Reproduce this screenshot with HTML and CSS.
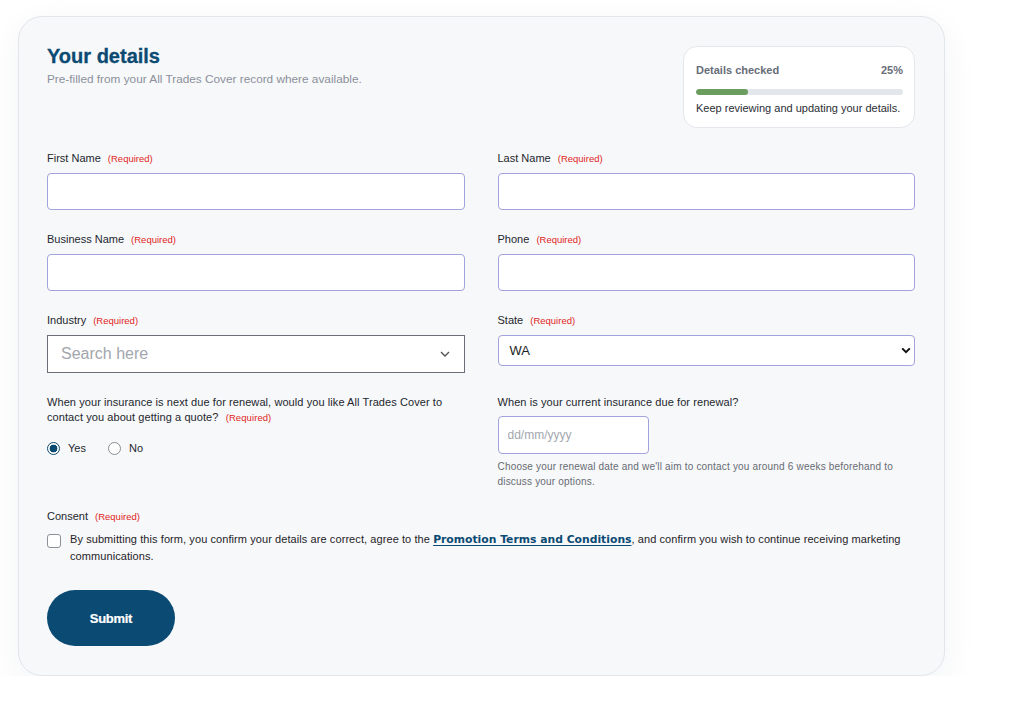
FILE: index.html
```html
<!DOCTYPE html>
<html lang="en">
<head>
<meta charset="utf-8">
<title>Your details</title>
<link rel="stylesheet" href="styles.css">
</head>
<body>
<main class="card">
  <header class="head">
    <div class="intro">
      <h1 class="title">Your details</h1>
      <p class="subtitle">Pre-filled from your All Trades Cover record where available.</p>
    </div>
    <aside class="progress">
      <div class="progress-row"><span>Details checked</span><span>25%</span></div>
      <div class="bar"><div class="bar-fill" style="width:25%"></div></div>
      <p class="progress-note">Keep reviewing and updating your details.</p>
    </aside>
  </header>

  <form class="form">
    <div class="grid">
      <div class="field">
        <label class="label">First Name <span class="req">(Required)</span></label>
        <input class="input" type="text">
      </div>
      <div class="field">
        <label class="label">Last Name <span class="req">(Required)</span></label>
        <input class="input" type="text">
      </div>
      <div class="field">
        <label class="label">Business Name <span class="req">(Required)</span></label>
        <input class="input" type="text">
      </div>
      <div class="field">
        <label class="label">Phone <span class="req">(Required)</span></label>
        <input class="input" type="text">
      </div>
      <div class="field">
        <label class="label">Industry <span class="req">(Required)</span></label>
        <div class="combo">
          <span class="combo-ph">Search here</span>
          <svg class="combo-chev" width="10" height="6" viewBox="0 0 10 6"><path d="M1 1l4 4 4-4" fill="none" stroke="#555" stroke-width="1.4"/></svg>
        </div>
      </div>
      <div class="field">
        <label class="label">State <span class="req">(Required)</span></label>
        <div class="select">
          <span class="select-val">WA</span>
          <svg class="select-chev" width="10" height="7" viewBox="0 0 10 7"><path d="M1.2 1.4l3.8 3.8 3.8-3.8" fill="none" stroke="#111" stroke-width="2"/></svg>
        </div>
      </div>
      <div class="field">
        <p class="question"><span class="ln">When your insurance is next due for renewal, would you like All Trades Cover to</span> <span class="ln">contact you about getting a quote?</span> <span class="req">(Required)</span></p>
        <div class="radios">
          <label class="radio"><span class="dot dot-on"></span>Yes</label>
          <label class="radio"><span class="dot"></span>No</label>
        </div>
      </div>
      <div class="field">
        <p class="question">When is your current insurance due for renewal?</p>
        <input class="input date" type="text" placeholder="dd/mm/yyyy">
        <p class="help"><span class="ln">Choose your renewal date and we'll aim to contact you around 6 weeks beforehand to</span> <span class="ln">discuss your options.</span></p>
      </div>
      <div class="field wide">
        <label class="label">Consent <span class="req">(Required)</span></label>
        <div class="consent">
          <span class="check"></span>
          <p class="consent-text"><span>By submitting this form, you confirm your details are correct, agree to the</span> <a class="link" href="#">Promotion Terms and Conditions</a><span>, and confirm you wish to continue receiving marketing</span> <span>communications.</span></p>
        </div>
      </div>
    </div>
    <button class="submit" type="button">Submit</button>
  </form>
</main>
</body>
</html>
```

FILE: styles.css
```css
* { box-sizing: border-box; }

body {
  margin: 0;
  padding: 16px 0 0 18px;
  background: #ffffff;
  font-family: "Liberation Sans", Arial, sans-serif;
  color: #1f2328;
}

.card {
  width: 927px;
  background: #f7f8fa;
  border: 1px solid #e2e5ea;
  border-radius: 24px;
  padding: 27px 29px 29px 28px;
  box-shadow: 0 10px 34px rgba(20, 45, 80, 0.06);
}

.head {
  display: flex;
  justify-content: space-between;
  align-items: flex-start;
}

.title {
  margin: 0;
  font-size: 20px;
  line-height: 24px;
  font-weight: 700;
  color: #0b4a73;
  -webkit-text-stroke: 0.3px #0b4a73;
}

.subtitle {
  margin: 3px 0 0;
  font-size: 11.8px;
  line-height: 16px;
  color: #8b909a;
}

.progress {
  margin-top: 2px;
  width: 232px;
  background: #ffffff;
  border: 1px solid #e4e7eb;
  border-radius: 14px;
  padding: 15px 11px 11px 12px;
}

.progress-row {
  display: flex;
  justify-content: space-between;
  font-size: 11px;
  line-height: 16px;
  font-weight: 700;
  color: #676d77;
}

.bar {
  margin-top: 11px;
  height: 6px;
  border-radius: 3px;
  background: #e3e6ea;
  overflow: hidden;
}

.bar-fill {
  height: 100%;
  background: #6a9d5e;
  border-radius: 3px;
}

.progress-note {
  margin: 5px 0 0;
  font-size: 11px;
  line-height: 16px;
  color: #2a2e34;
}

.form { margin-top: 23px; }

.grid {
  display: grid;
  grid-template-columns: 1fr 1fr;
  column-gap: 33px;
  row-gap: 22px;
}

.field { display: flex; flex-direction: column; align-items: flex-start; }
.wide { grid-column: 1 / 3; margin-top: -2px; }

.label {
  font-size: 11px;
  line-height: 14px;
  color: #23272d;
  margin-bottom: 7px;
}

.req {
  font-size: 9.5px;
  color: #e0251b;
  margin-left: 4px;
}

.input {
  width: 100%;
  height: 37px;
  border: 1px solid #a2a3dc;
  border-radius: 4px;
  background: #ffffff;
  font-family: inherit;
  font-size: 12px;
  padding: 0 9px;
  outline: none;
}

.input::placeholder { color: #a3a7ae; }

.combo {
  width: 100%;
  height: 38px;
  border: 1px solid #6b6f78;
  background: #ffffff;
  display: flex;
  align-items: center;
  justify-content: space-between;
  padding: 0 14px 0 13px;
}

.combo-ph {
  font-size: 16px;
  color: #a2a6ad;
}

.select {
  width: 100%;
  height: 31px;
  border: 1px solid #a2a3dc;
  border-radius: 4px;
  background: #ffffff;
  display: flex;
  align-items: center;
  justify-content: space-between;
  padding: 0 3px 0 11px;
}

.select-val { font-size: 13px; color: #1b1e22; }

.question {
  margin: 0;
  font-size: 11px;
  line-height: 15px;
  color: #23272d;
  letter-spacing: 0.08px;
}

.radios {
  display: flex;
  align-items: center;
  margin-top: 15px;
  gap: 22px;
  height: 16px;
}

.radio {
  display: flex;
  align-items: center;
  gap: 8px;
  font-size: 11px;
  color: #23272d;
}

.dot {
  width: 13px;
  height: 13px;
  border-radius: 50%;
  border: 1px solid #8a8d93;
  background: #ffffff;
}

.dot-on {
  border-color: #0b4a73;
  background: radial-gradient(circle, #0b4a73 0 3.6px, #ffffff 4.2px);
}

.date {
  width: 151px;
  height: 38px;
  margin-top: 6px;
}

.help {
  margin: 5px 0 0;
  font-size: 10px;
  line-height: 15px;
  color: #676b72;
  letter-spacing: 0.19px;
}

.consent {
  display: flex;
  align-items: flex-start;
  gap: 9px;
}

.check {
  flex: none;
  width: 14px;
  height: 14px;
  margin-top: 3px;
  border: 1px solid #8d9096;
  border-radius: 3px;
  background: #ffffff;
}

.consent-text {
  margin: 0;
  font-size: 11px;
  line-height: 17px;
  color: #1f2328;
  letter-spacing: 0.08px;
}

.link {
  font-family: "DejaVu Sans", "Liberation Sans", sans-serif;
  font-weight: 700;
  font-size: 10.8px;
  letter-spacing: 0;
  color: #0b4a73;
  text-decoration: underline;
  text-underline-offset: 2px;
}

.submit {
  margin-top: 25px;
  width: 128px;
  height: 56px;
  border: none;
  border-radius: 28px;
  background: #0b4a72;
  color: #ffffff;
  font-family: "Liberation Sans", Arial, sans-serif;
  font-weight: 700;
  font-size: 13px;
  letter-spacing: -0.3px;
  -webkit-text-stroke: 0.2px #ffffff;
  cursor: pointer;
}
```
